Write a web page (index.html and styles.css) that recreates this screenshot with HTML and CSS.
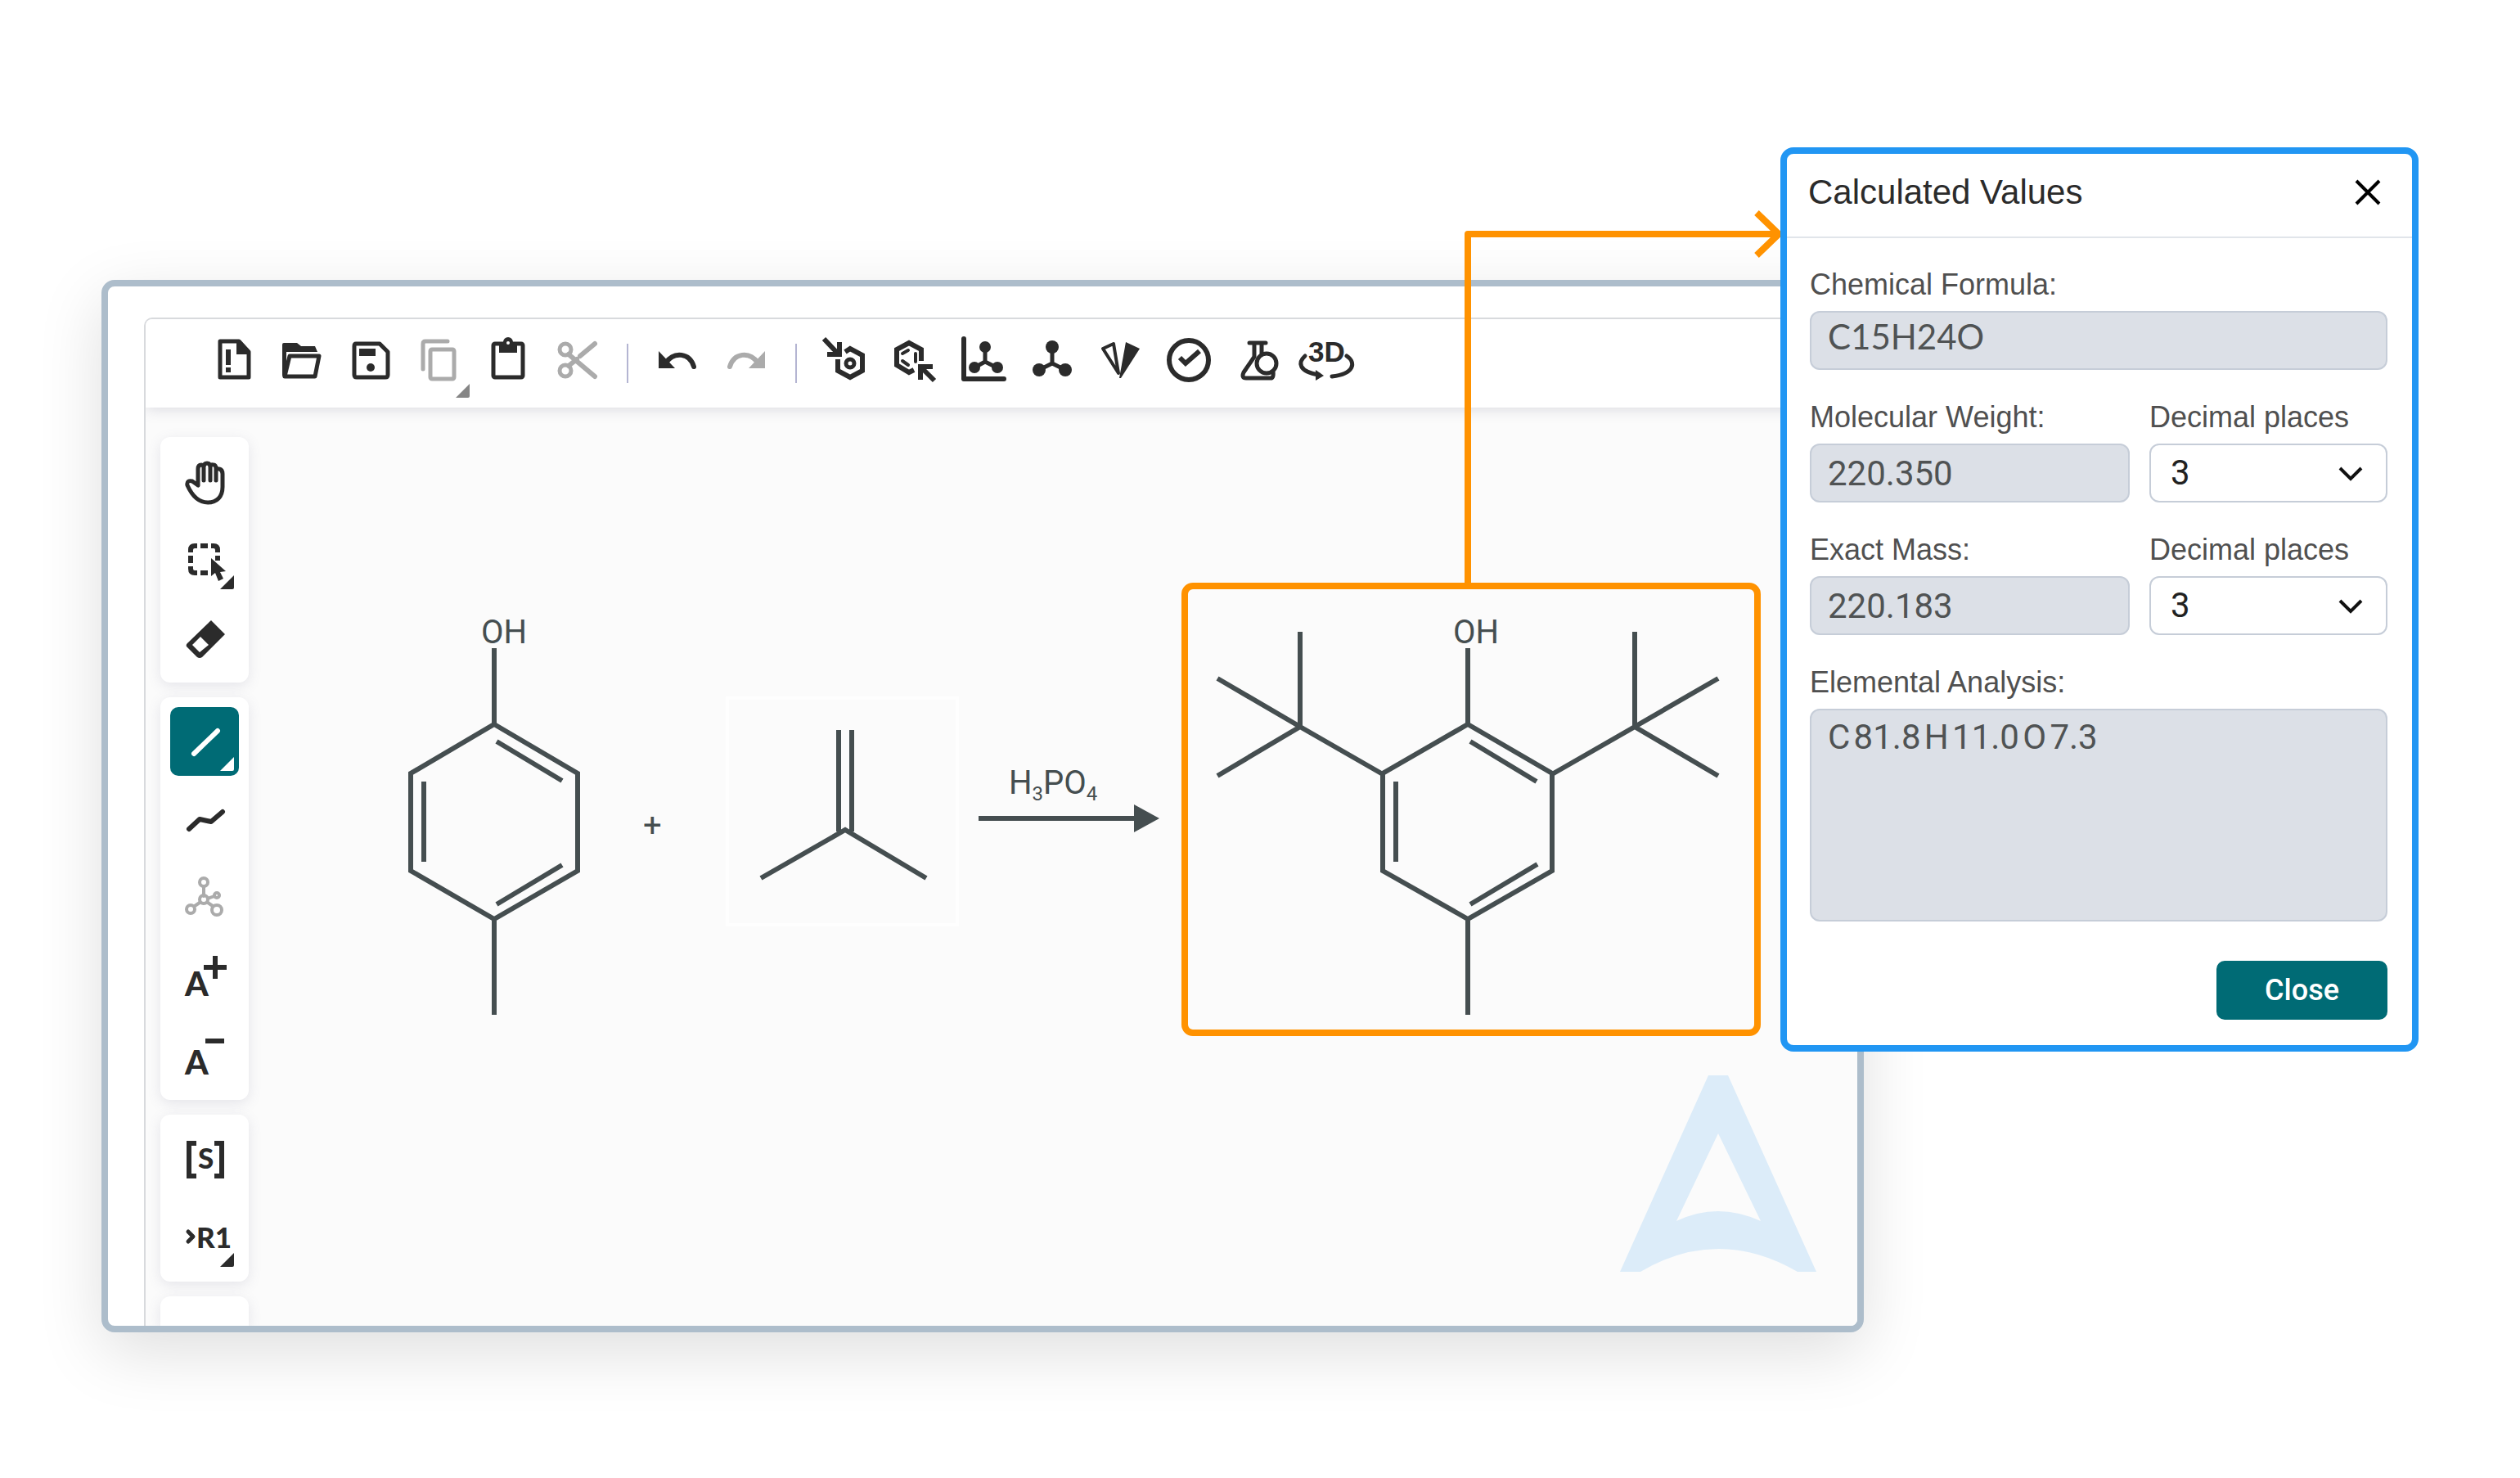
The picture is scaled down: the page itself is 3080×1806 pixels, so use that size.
FILE: index.html
```html
<!DOCTYPE html>
<html lang="en">
<head>
    <meta charset="UTF-8">
    <meta name="viewport" content="width=device-width, initial-scale=1.0">
    <title>Calculated Values</title>
    <link rel="stylesheet" href="styles.css">
</head>
<body>
    <main class="stage">
        <div class="editor">
            <div class="app">
                <div class="toolbar">
                    <button class="tool" aria-label="New">
                        <svg viewBox="0 0 84 84"><path d="M25 15h23l12 13v31H25z"/><path class="fill" d="M45 14h5l12 14v3H45zM32 25h6v19h-6zM32 47h6v6h-6z"/></svg>
                    </button>
                    <button class="tool" aria-label="Open">
                        <svg viewBox="0 0 84 84"><path class="fill" d="M17 19q0-2 2-2h16l5 4h17l3 7H22v32q-5 0-5-4z"/><path d="M26 33h36l-5 25H20z"/></svg>
                    </button>
                    <button class="tool" aria-label="Save">
                        <svg viewBox="0 0 84 84"><path d="M23 18h29l10 10v28q0 3-3 3H24q-3 0-3-3V21q0-3 2-3z"/><path class="fill" d="M27 24h20v9H27z"/><circle class="fill" cx="41" cy="47" r="5"/></svg>
                    </button>
                    <button class="tool disabled" aria-label="Copy">
                        <svg viewBox="0 0 84 84"><path d="M21 49V18q0-3 3-3h27"/><rect x="30" y="25" width="29" height="36" rx="2"/><path class="corner" d="M78 67v15q0 2-2 2H61z"/></svg>
                    </button>
                    <button class="tool" aria-label="Paste">
                        <svg viewBox="0 0 84 84"><rect x="23" y="18" width="36" height="41" rx="2"/><path class="fill" d="M30 16h5a6 6 0 0 1 12 0h5v13H30z"/><circle class="hole" cx="41" cy="17" r="2"/></svg>
                    </button>
                    <button class="tool disabled" aria-label="Cut">
                        <svg viewBox="0 0 84 84"><circle cx="27" cy="25" r="7"/><circle cx="27" cy="51" r="7"/><path class="thick" d="M31 31l32 27M31 45l10-8M45 33l18-15"/></svg>
                    </button>
                    <span class="divider"></span>
                    <button class="tool" aria-label="Undo">
                        <svg viewBox="0 0 84 84"><path class="fill" d="M19 27v21h20z"/><path class="thick" d="M28 41C38 27 57 29 62 46"/></svg>
                    </button>
                    <button class="tool disabled" aria-label="Redo">
                        <svg viewBox="0 0 84 84"><path class="fill" d="M65 27v21H45z"/><path class="thick" d="M56 41C46 27 27 29 22 46"/></svg>
                    </button>
                    <span class="divider"></span>
                    <button class="tool" aria-label="Layout">
                        <svg viewBox="0 0 84 84"><path class="square" d="M15 12l18 19M34 16v15H19M41 28l6-4 15 8v19l-15 8-15-8V37"/><circle cx="47" cy="42" r="5"/></svg>
                    </button>
                    <button class="tool" aria-label="Clean Up">
                        <svg viewBox="0 0 84 84"><path class="square" d="M50 39V25l-15-8-15 8v19l15 9 6-3M66 63L49 46M49 62V46h15"/><path class="thin" d="M27 30l7-4M43 30v10M27 39l7 5"/></svg>
                    </button>
                    <button class="tool" aria-label="Calculated Values">
                        <svg viewBox="0 0 84 84"><path class="thick" d="M18 12v49h49"/><path d="M44 22v18M31 47l13-7 14 7"/><circle class="fill" cx="44" cy="22" r="7"/><circle class="fill" cx="31" cy="47" r="7"/><circle class="fill" cx="59" cy="47" r="7"/></svg>
                    </button>
                    <button class="tool" aria-label="Add/Remove explicit hydrogens">
                        <svg viewBox="0 0 84 84"><path d="M42 22v20M26 50l16-8 16 8"/><circle class="fill" cx="42" cy="22" r="8"/><circle class="fill" cx="26" cy="50" r="8"/><circle class="fill" cx="58" cy="50" r="8"/></svg>
                    </button>
                    <button class="tool" aria-label="Stereochemistry">
                        <svg viewBox="0 0 84 84"><path class="thin" d="M20 24l13-6 6 36z"/><path class="fill" d="M48 16l17 8-23 36h-2z"/></svg>
                    </button>
                    <button class="tool" aria-label="Check Structure">
                        <svg viewBox="0 0 84 84"><circle class="thick" cx="41" cy="38" r="24"/><path class="square" d="M30 35l7 7 17-15"/></svg>
                    </button>
                    <button class="tool" aria-label="Reagents">
                        <svg viewBox="0 0 84 84"><path d="M31 17h20M37 18v16L24 53q-3 7 3 7h30q4 0 3-8M46 18v12"/><circle cx="52" cy="42" r="12"/></svg>
                    </button>
                    <button class="tool" aria-label="3D Viewer">
                        <svg viewBox="0 0 84 84"><text class="label-3d" x="19" y="40">3D</text><path d="M15 33c-9 8-8 19 17 23M66 33c12 8 9 22-18 25"/><path class="fill" d="M28 50l10 7-10 6z"/></svg>
                    </button>
                </div>

                <div class="workspace">
                    <div class="sidebar">
                        <div class="panel">
                            <button class="tool" aria-label="Hand">
                                <svg viewBox="0 0 84 84"><path d="M34 47V27q0-5 4-5 3 0 3 4v15M41 25q0-5 4-5t4 5v16M49 24q1-3 4-2 3 0 3 5v14M56 29q1-3 4-2 4 1 4 6v16c0 12-7 19-18 19-12 0-20-10-25-21-1-5 2-6 6-5l7 5"/></svg>
                            </button>
                            <button class="tool" aria-label="Select">
                                <svg viewBox="0 0 84 84"><path class="square" d="M25 33v-3q0-5 5-5h3M37 25h9M50 25h3q5 0 5 5v3M25 37v9M25 50v3q0 5 5 5h3M37 58h9M58 37v6"/><path class="fill" d="M50 40v22l5-4 4 10 6-3-4-8 7-1z"/><path class="fill" d="M78 61v15q0 2-2 2H61z"/></svg>
                            </button>
                            <button class="tool" aria-label="Erase">
                                <svg viewBox="0 0 84 84"><path class="fill" fill-rule="evenodd" d="M50 20l17 17-28 28q-3 2-6 0L20 52q-1-2 1-4zM37 40L27 50l9 9 11-9z"/></svg>
                            </button>
                        </div>
                        <div class="panel">
                            <button class="tool active" aria-label="Single Bond">
                                <svg viewBox="0 0 84 84"><path class="thick" d="M29 57l29-28"/><path class="fill" d="M78 61v15q0 2-2 2H61z"/></svg>
                            </button>
                            <button class="tool" aria-label="Chain">
                                <svg viewBox="0 0 84 84"><path class="thick" d="M23 53l13-12 14 3 14-12"/></svg>
                            </button>
                            <button class="tool disabled" aria-label="Stereo">
                                <svg viewBox="0 0 84 84"><g class="thin"><path d="M41 27v12M36 47l-6 4M46 47l6 4M46 42l8-3"/><circle cx="41" cy="22" r="5"/><circle cx="41" cy="43" r="5"/><circle cx="25" cy="55" r="5"/><circle cx="57" cy="56" r="6"/><circle cx="57" cy="38" r="3"/></g></svg>
                            </button>
                            <button class="tool" aria-label="Charge Plus">
                                <svg viewBox="0 0 84 84"><text class="glyph" x="18" y="65">A</text><path class="square" d="M41 30h28M55 16v28"/></svg>
                            </button>
                            <button class="tool" aria-label="Charge Minus">
                                <svg viewBox="0 0 84 84"><text class="glyph" x="18" y="65">A</text><path class="square" d="M43 24h23"/></svg>
                            </button>
                        </div>
                        <div class="panel">
                            <button class="tool" aria-label="S-Group">
                                <svg viewBox="0 0 84 84"><path class="square" d="M32 23h-9v40h9M54 23h9v40h-9"/><text class="glyph-s" x="34" y="54">S</text></svg>
                            </button>
                            <button class="tool" aria-label="R-Group Label">
                                <svg viewBox="0 0 84 84"><path d="M22 35l6 6-6 6"/><text class="glyph-r" x="32" y="55">R1</text><path class="fill" d="M78 61v15q0 2-2 2H61z"/></svg>
                            </button>
                        </div>
                        <div class="panel panel-cut"></div>
                    </div>

                    <!-- reaction scheme -->
                    <svg class="canvas" viewBox="304 498 1966 1122">
                        <!-- p-cresol -->
                        <g class="bonds">
                            <path d="M604 792v93M604 885l102 60v119l-102 59-102-59V945zM604 1123v117"/>
                            <path d="M607 906l80 48M518 955v98M607 1105l80-48"/>
                        </g>
                        <text class="atom" x="588" y="786">OH</text>
                        <text class="atom" x="786" y="1022">+</text>

                        <!-- isobutene -->
                        <rect class="frame" x="889" y="853" width="281" height="277"/>
                        <path class="bonds" d="M1025 892v124M1041 892v124M930 1073l103-59 99 59"/>

                        <text class="atom" x="1233" y="970">H<tspan class="sub" dy="8">3</tspan><tspan dy="-8">PO</tspan><tspan class="sub" dy="8">4</tspan></text>
                        <path class="bonds" d="M1196 1000h192"/>
                        <path class="head" d="M1386 983l31 17-31 17z"/>

                        <!-- product -->
                        <rect class="highlight" x="1448" y="716" width="700" height="546" rx="10"/>
                        <g class="bonds">
                            <path d="M1794 792v93M1794 885l103 60v119l-103 59-104-59V945zM1794 1123v117"/>
                            <path d="M1797 906l81 49M1706 955v98M1797 1105l82-49"/>
                            <path d="M1690 946l-101-58V772M1488 829l101 59-101 60"/>
                            <path d="M1897 946l101-58V772M2100 829l-102 59 102 60"/>
                        </g>
                        <text class="atom" x="1776" y="786">OH</text>

                        <path class="logo" fill-rule="evenodd" d="M2088 1314h24l108 240h-23q-97-56-192 0h-25zM2100 1385l-51 107q50-24 103 0z"/>
                    </svg>
                </div>
            </div>
        </div>

        <svg class="connector" viewBox="0 0 400 470">
            <path d="M18 464V36h380M371 10l27 26-27 26"/>
        </svg>

        <section class="dialog" role="dialog" aria-labelledby="dialogTitle">
            <header class="dialog-header">
                <h1 id="dialogTitle">Calculated Values</h1>
                <button class="dialog-x" aria-label="Close window">
                    <svg viewBox="0 0 32 32"><path d="M2 2l28 28M30 2L2 30"/></svg>
                </button>
            </header>
            <form class="dialog-body">
                <div class="field">
                    <label for="formula">Chemical Formula:</label>
                    <input class="formula" id="formula" type="text" value="C15H24O" readonly>
                </div>
                <div class="row">
                    <div class="field">
                        <label for="weight">Molecular Weight:</label>
                        <input id="weight" type="text" value="220.350" readonly>
                    </div>
                    <div class="field">
                        <label for="weightPlaces">Decimal places</label>
                        <div class="select">
                            <select id="weightPlaces">
                                <option>1</option>
                                <option>2</option>
                                <option selected>3</option>
                                <option>4</option>
                            </select>
                            <svg viewBox="0 0 30 18"><path d="M2 2l13 13L28 2"/></svg>
                        </div>
                    </div>
                </div>
                <div class="row">
                    <div class="field">
                        <label for="mass">Exact Mass:</label>
                        <input id="mass" type="text" value="220.183" readonly>
                    </div>
                    <div class="field">
                        <label for="massPlaces">Decimal places</label>
                        <div class="select">
                            <select id="massPlaces">
                                <option>1</option>
                                <option>2</option>
                                <option selected>3</option>
                                <option>4</option>
                            </select>
                            <svg viewBox="0 0 30 18"><path d="M2 2l13 13L28 2"/></svg>
                        </div>
                    </div>
                </div>
                <div class="field">
                    <label for="analysis">Elemental Analysis:</label>
                    <textarea id="analysis" readonly>C&hairsp;81.8&hairsp;H&hairsp;11.0&hairsp;O&hairsp;7.3</textarea>
                </div>
                <button class="close-btn" type="button">Close</button>
            </form>
        </section>
    </main>
</body>
</html>
```
FILE: styles.css
```css
* {
    box-sizing: border-box;
}
body {
    margin: 0;
    background-color: #fff;
    font-family: "Liberation Sans", Arial, sans-serif;
}
button {
    border: none;
    padding: 0;
    background: none;
    cursor: pointer;
}
.stage {
    position: relative;
    padding: 342px 802px 178px 124px;
}

/* editor window */
.editor {
    padding: 38px 0 0 44px;
    border: 8px solid #adbdcb;
    border-radius: 16px;
    background-color: #fff;
    box-shadow: 0 24px 80px rgba(0, 0, 0, 0.13);
    overflow: hidden;
}
.app {
    border-top: 2px solid #d8dadd;
    border-left: 2px solid #d8dadd;
    border-top-left-radius: 10px;
    overflow: hidden;
}
.toolbar {
    position: relative;
    display: flex;
    align-items: center;
    height: 108px;
    padding-left: 66px;
    background-color: #fff;
    box-shadow: 0 2px 16px rgba(103, 104, 132, 0.22);
}
.divider {
    width: 2px;
    height: 48px;
    margin: 0 18px;
    background-color: #b4b5d2;
}
.tool {
    width: 84px;
    height: 84px;
    border-radius: 10px;
    color: #2b2b2b;
}
.tool.disabled {
    color: #ababab;
}
.tool.active {
    background-color: #006b75;
    color: #fff;
}
.tool svg {
    display: block;
    width: 100%;
    fill: none;
    stroke: currentColor;
    stroke-width: 5;
    stroke-linecap: round;
    stroke-linejoin: round;
}
.tool .thick {
    stroke-width: 6;
}
.tool .thin {
    stroke-width: 4;
}
.tool .square {
    stroke-width: 6;
    stroke-linecap: butt;
    stroke-linejoin: miter;
}
.tool .fill {
    fill: currentColor;
    stroke: none;
}
.tool .corner {
    fill: #858585;
    stroke: none;
}
.tool .hole {
    fill: #fff;
    stroke: none;
}
.tool text {
    fill: currentColor;
    stroke: none;
    font-family: Lato, sans-serif;
    font-weight: 900;
}
.glyph {
    font-size: 41px;
}
.glyph-s {
    font-size: 35px;
}
.glyph-r {
    font-size: 35px;
}
.tool .label-3d {
    font-family: "Liberation Sans", Arial, sans-serif;
    font-size: 35px;
    font-weight: bold;
}
.workspace {
    display: flex;
    background-color: #fbfbfb;
}
.sidebar {
    display: flex;
    flex-direction: column;
    gap: 18px;
    padding: 36px 0 0 18px;
}
.panel {
    display: flex;
    flex-direction: column;
    gap: 12px;
    padding: 12px;
    border-radius: 12px;
    background-color: #fff;
    box-shadow: 0 4px 16px rgba(103, 104, 132, 0.15);
}
.panel-cut {
    flex: 1;
    border-radius: 12px 12px 0 0;
}

/* drawing area */
.canvas {
    display: block;
    flex: 1;
    min-width: 0;
}
.bonds {
    fill: none;
    stroke: #454e50;
    stroke-width: 6;
}
.head {
    fill: #454e50;
}
.atom {
    fill: #454e50;
    font-family: Roboto, sans-serif;
    font-size: 40px;
}
.sub {
    font-size: 24px;
}
.frame {
    fill: none;
    stroke: #fefefe;
    stroke-width: 4;
}
.highlight {
    fill: none;
    stroke: #ff9200;
    stroke-width: 8;
}
.logo {
    fill: #dcecf9;
}
.connector {
    position: absolute;
    top: 250px;
    right: 904px;
    width: 400px;
    fill: none;
    stroke: #ff9200;
    stroke-width: 8;
    stroke-linejoin: round;
}

/* calculated values dialog */
.dialog {
    position: absolute;
    top: 180px;
    right: 124px;
    width: 780px;
    border: 8px solid #2196f3;
    border-radius: 16px;
    background-color: #fff;
    color: #505050;
}
.dialog-header {
    display: flex;
    justify-content: space-between;
    align-items: center;
    height: 103px;
    padding: 0 38px 8px 26px;
    border-bottom: 2px solid #e1e5ea;
}
.dialog-header h1 {
    margin: 0;
    font-size: 42px;
    font-weight: normal;
    line-height: 48px;
    color: #2b2b2b;
}
.dialog-x svg {
    display: block;
    width: 32px;
    fill: none;
    stroke: #000;
    stroke-width: 4;
}
.dialog-body {
    display: flex;
    flex-direction: column;
    gap: 36px;
    padding: 35px 30px 31px 28px;
}
.row {
    display: grid;
    grid-template-columns: 1fr 291px;
    gap: 24px;
}
.field {
    display: flex;
    flex-direction: column;
    gap: 10px;
}
.field label {
    font-size: 36px;
    line-height: 44px;
}
.field input,
.field select,
.field textarea {
    width: 100%;
    height: 72px;
    padding: 0 20px;
    border: 2px solid #c6cdd8;
    border-radius: 12px;
    background-color: #dce0e7;
    color: #505354;
    font-family: Roboto, sans-serif;
    font-size: 42px;
    outline: none;
}
.field .formula {
    padding-bottom: 10px;
    font-family: Lato, sans-serif;
}
.field textarea {
    display: block;
    height: 260px;
    padding-top: 9px;
    line-height: 48px;
    resize: none;
}
.select {
    position: relative;
}
.field select {
    appearance: none;
    padding: 0 24px 2px;
    background-color: #fff;
    color: #222;
}
.select svg {
    position: absolute;
    top: 28px;
    right: 30px;
    width: 30px;
    fill: none;
    stroke: #111;
    stroke-width: 4;
    pointer-events: none;
}
.close-btn {
    align-self: flex-end;
    width: 209px;
    height: 72px;
    margin-top: 12px;
    border-radius: 10px;
    background-color: #006b75;
    color: #fff;
    font-family: Roboto, sans-serif;
    font-size: 36px;
    font-weight: 500;
}
```
